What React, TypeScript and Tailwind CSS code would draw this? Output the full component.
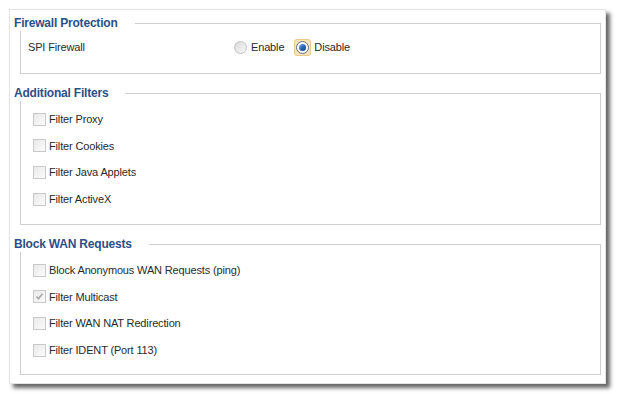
import React from 'react';

const font = { fontFamily: '"Liberation Sans", Arial, sans-serif' };

function Checkbox({ checked }: { checked?: boolean }) {
  return (
    <span className="relative flex h-[13px] w-[13px] shrink-0 items-center justify-center border border-[#c9c9c9] bg-gradient-to-br from-[#e9e9e9] to-[#fbfbfb]">
      {checked && (
        <svg viewBox="0 0 11 11" className="h-[11px] w-[11px]">
          <path d="M2.5 5.5 L4.5 7.8 L8.5 2.8" fill="none" stroke="#a8a8a8" strokeWidth="1.6" />
        </svg>
      )}
    </span>
  );
}

function Radio({ checked }: { checked?: boolean }) {
  if (checked) {
    return (
      <span className="flex h-[17px] w-[17px] items-center justify-center rounded-[3px] border border-[#e8c88e] bg-[#f9e3b9]">
        <span className="flex h-[13px] w-[13px] items-center justify-center rounded-full border border-[#5d6f86] bg-white">
          <span className="h-[7px] w-[7px] rounded-full bg-gradient-to-br from-[#7fb4e8] via-[#2a68b0] to-[#123e78]" />
        </span>
      </span>
    );
  }
  return (
    <span className="h-[13px] w-[13px] rounded-full border border-[#c2c2c2] bg-gradient-to-br from-[#d8d8d8] to-[#fafafa]" />
  );
}

function Section({
  title,
  children,
  boxClass,
}: {
  title: string;
  children: React.ReactNode;
  boxClass: string;
}) {
  return (
    <div>
      <div className="flex h-[15px] items-stretch">
        <span className="text-[12px] font-bold leading-[15px] tracking-[-0.2px] text-[#2d4f88]">{title}</span>
        <div className="ml-[17px] mt-[7px] flex-1 border-t border-r border-[#cfcfcf]" />
      </div>
      <div className={`ml-[6px] border-r border-b border-l border-[#cfcfcf] ${boxClass}`}>{children}</div>
    </div>
  );
}

function CheckRow({ label, checked }: { label: string; checked?: boolean }) {
  return (
    <div className="flex h-[26.67px] items-center pl-[12px]">
      <Checkbox checked={checked} />
      <span className="ml-[3px] text-[11px] tracking-[-0.15px] text-[#2a2a2a]">{label}</span>
    </div>
  );
}

export default function App() {
  return (
    <div className="h-[394px] w-[617px] bg-white" style={font}>
      <div className="ml-[9px] pt-[9px]">
        <div className="flex h-[375px] w-[597px] flex-col border border-[#e4e4e4] bg-white px-1 pt-[6px] shadow-[4px_4px_4px_rgba(0,0,0,0.6)]">
          <Section title="Firewall Protection" boxClass="h-[43px] pt-[6px]">
            <div className="flex h-[20px] items-center pl-[7px] text-[11px] tracking-[-0.15px] text-[#2a2a2a]">
              <span className="w-[206px]">SPI Firewall</span>
              <Radio />
              <span className="ml-[4px]">Enable</span>
              <span className="ml-[10px]">
                <Radio checked />
              </span>
              <span className="ml-[3px]">Disable</span>
            </div>
          </Section>
          <div className="mt-[12px]">
            <Section title="Additional Filters" boxClass="h-[124px] pt-[5px]">
              <CheckRow label="Filter Proxy" />
              <CheckRow label="Filter Cookies" />
              <CheckRow label="Filter Java Applets" />
              <CheckRow label="Filter ActiveX" />
            </Section>
          </div>
          <div className="mt-[12px]">
            <Section title="Block WAN Requests" boxClass="h-[123px] pt-[5px]">
              <CheckRow label="Block Anonymous WAN Requests (ping)" />
              <CheckRow label="Filter Multicast" checked />
              <CheckRow label="Filter WAN NAT Redirection" />
              <CheckRow label="Filter IDENT (Port 113)" />
            </Section>
          </div>
        </div>
      </div>
    </div>
  );
}
